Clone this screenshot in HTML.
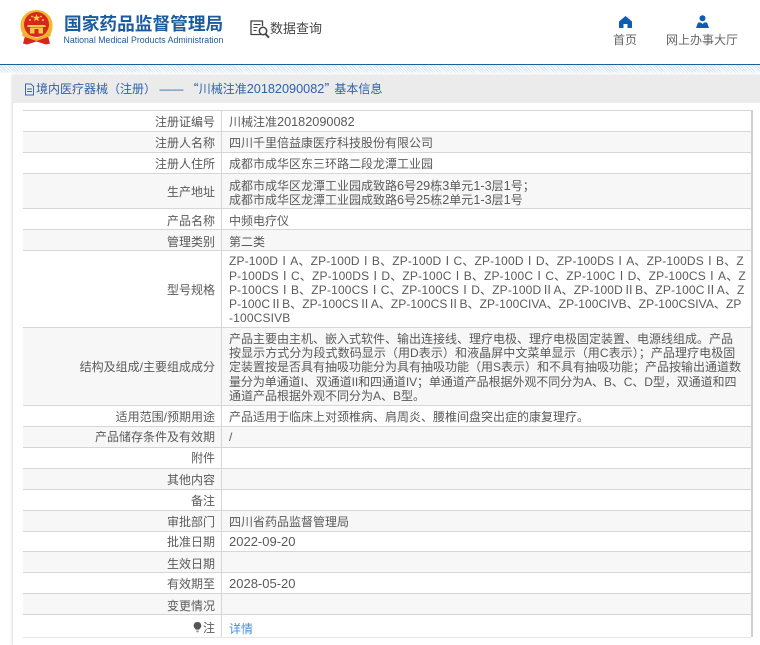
<!DOCTYPE html>
<html lang="zh"><head><meta charset="utf-8"><title>基本信息</title>
<style>
html,body{margin:0;padding:0;background:#fff}
#p{position:relative;width:760px;height:645px;overflow:hidden;background:#fff;font:12px/14.2px "Liberation Sans","Noto Sans CJK SC",sans-serif;color:#5a5a5a}
#p div,#p svg{position:absolute}
i{font-style:normal;font-size:12.7px}
b{font-weight:400;font-family:"Noto Sans CJK SC",sans-serif}
.r{left:23px;width:728px;border-bottom:1px solid #d6d6d6;box-sizing:border-box;--o:1px}
.e{background:#f7f7f7}
.l{left:0;width:192px;text-align:right;top:0;bottom:0;display:flex;align-items:center;justify-content:flex-end;transform:translateY(var(--o))}
.v{left:206px;top:0;bottom:0;width:522px;white-space:nowrap;display:flex;align-items:center;transform:translateY(var(--o))}
.v span{display:block}
.d{left:221px;top:110px;width:1px;height:527px;background:#d6d6d6}
.o2{--o:2px}
</style></head><body><div id="p">
<svg style="left:20px;top:9px" width="33" height="38" viewBox="0 0 33 38">
<path d="M4 27C1 23 .5 19 .5 16.500.5 7.500 7.500 1 16.500 1S32.500 7.500 32.500 16.500C32.500 20 32 24 29 27Z" fill="#f2b632"/>
<circle cx="16.500" cy="15.500" r="12.500" fill="#d8261f"/>
<path d="M16.500 5l1 2.800h2.900l-2.300 1.700.9 2.800-2.500-1.700-2.500 1.700.9-2.800-2.300-1.700h2.900z" fill="#f7d24a"/>
<circle cx="10" cy="11" r="1" fill="#f7d24a"/><circle cx="23" cy="11" r="1" fill="#f7d24a"/><circle cx="12" cy="7.500" r=".9" fill="#f7d24a"/><circle cx="21" cy="7.500" r=".9" fill="#f7d24a"/>
<path d="M8 16h17l1 2H7zM10 18.500h13v6H10z" fill="#f4c84a"/>
<path d="M14.500 20h4v4.500h-4z" fill="#d8261f"/>
<path d="M5 27l-2 7.500 4 1 9.500-3 9.500 3 4-1L28 27l-11.500 4z" fill="#d8261f"/>
<path d="M3 24l13.500 5L30 24l1 3-14.500 5L2 27z" fill="#edb02d"/>
</svg>
<div style="left:64px;top:14px;font-size:17.700px;line-height:20px;font-weight:700;color:#1c5c9c;white-space:nowrap">国家药品监督管理局</div>
<div style="left:63.500px;top:35px;font-size:8.800px;line-height:11px;color:#1c5c9c;white-space:nowrap">National Medical Products Administration</div>
<svg style="left:250px;top:20px" width="21" height="20" viewBox="0 0 21 20" fill="none" stroke="#444" stroke-width="1.300">
<path d="M11 14.500H1V1h11.500v5"/><path d="M3.500 4.500h7M3.500 7.500h4M3.500 10.500h3" stroke-width="1.100"/>
<circle cx="13" cy="11" r="3.700" stroke-width="1.500"/><path d="M15.500 14l3.500 3.700" stroke-width="2"/>
</svg>
<div style="left:270px;top:20px;font-size:13px;line-height:17px;color:#444;white-space:nowrap">数据查询</div>
<svg style="left:619px;top:16px" width="13" height="12" viewBox="0 0 13 12"><path d="M6.500 0L13 5.500V12H8.500V8h-4v4H0V5.500z" fill="#0f5cb3"/></svg>
<svg style="left:696px;top:15px" width="13" height="13" viewBox="0 0 13 13"><circle cx="6.500" cy="3.200" r="3" fill="#0f5cb3"/><path d="M0 13L2 7.500h3L6.500 9 8 7.500h3l2 5.500z" fill="#0f5cb3"/></svg>
<div style="left:613px;top:33px;color:#666;line-height:15px;font-size:12px;white-space:nowrap">首页</div>
<div style="left:666px;top:33px;color:#666;line-height:15px;font-size:12px;white-space:nowrap">网上办事大厅</div>
<div style="left:0;top:64px;width:760px;height:1px;background:#1f5f98"></div>
<div style="left:0;top:65px;width:760px;height:8px;background:repeating-linear-gradient(45deg,#cfe4f2 0 1px,#fff 1px 2px)"></div>
<div style="left:0;top:70px;width:760px;height:5px;background:linear-gradient(#fff0,#fff)"></div>
<div style="left:13px;top:75px;width:760px;height:570px;background:#fff;box-shadow:-1px 0 3px #ddd"></div>
<div style="left:13px;top:75px;width:747px;height:28px;background:#ebebeb"></div>
<svg style="left:24px;top:83px" width="11" height="13" viewBox="0 0 11 13" fill="none" stroke="#3d68a5"><path d="M1.500 1h5.500l2.500 2.500V12h-8zM3 6h5M3 8.500h5"/></svg>
<div style="left:36px;top:81px;color:#2f62a5;line-height:16px;white-space:nowrap">境内医疗器械（注册） —— <b>“</b>川械注准<i>20182090082</i><b>”</b><span style="margin-left:-2px">基本信息</span></div>
<div style="left:23px;top:110px;width:728px;height:1px;background:#d6d6d6"></div>
<div style="left:751px;top:110px;width:2px;height:527px;background:#d0d0d0"></div>
<div class="r" style="top:111px;height:21px"><div class="l">注册证编号</div><div class="v">川械注准<i>20182090082</i></div></div>
<div class="r e" style="top:132px;height:21px"><div class="l">注册人名称</div><div class="v">四川千里倍益康医疗科技股份有限公司</div></div>
<div class="r" style="top:153px;height:21px"><div class="l">注册人住所</div><div class="v">成都市成华区东三环路二段龙潭工业园</div></div>
<div class="r e o2" style="top:174px;height:35px"><div class="l" style="--o:1px">生产地址</div><div class="v"><span>成都市成华区龙潭工业园成致路<i>6</i>号<i>29</i>栋<i>3</i>单元<i>1-3</i>层<i>1</i>号；<br>成都市成华区龙潭工业园成致路<i>6</i>号<i>25</i>栋<i>2</i>单元<i>1-3</i>层<i>1</i>号</span></div></div>
<div class="r o2" style="top:209px;height:21px"><div class="l">产品名称</div><div class="v">中频电疗仪</div></div>
<div class="r e o2" style="top:230px;height:21px"><div class="l">管理类别</div><div class="v">第二类</div></div>
<div class="r" style="top:251px;height:77px"><div class="l">型号规格</div><div class="v"><span style="letter-spacing:.16px">ZP-100DⅠA、ZP-100DⅠB、ZP-100DⅠC、ZP-100DⅠD、ZP-100DSⅠA、ZP-100DSⅠB、Z<br>P-100DSⅠC、ZP-100DSⅠD、ZP-100CⅠB、ZP-100CⅠC、ZP-100CⅠD、ZP-100CSⅠA、Z<br>P-100CSⅠB、ZP-100CSⅠC、ZP-100CSⅠD、ZP-100DⅡA、ZP-100DⅡB、ZP-100CⅡA、Z<br><u style="text-decoration:none;letter-spacing:.06px">P-100CⅡB、ZP-100CSⅡA、ZP-100CSⅡB、ZP-100CIVA、ZP-100CIVB、ZP-100CSIVA、ZP</u><br>-100CSIVB</span></div></div>
<div class="r e" style="top:328px;height:78px"><div class="l">结构及组成/主要组成成分</div><div class="v"><span style="line-height:14.3px">产品主要由主机、嵌入式软件、输出连接线、理疗电极、理疗电极固定装置、电源线组成。产品<br><u style="text-decoration:none;letter-spacing:.07px">按显示方式分为段式数码显示（用D表示）和液晶屏中文菜单显示（用C表示）；产品理疗电极固</u><br>定装置按是否具有抽吸功能分为具有抽吸功能（用S表示）和不具有抽吸功能；产品按输出通道数<br><u style="text-decoration:none;letter-spacing:-.07px">量分为单通道I、双通道II和四通道IV；单通道产品根据外观不同分为A、B、C、D型，双通道和四</u><br>通道产品根据外观不同分为A、B型。</span></div></div>
<div class="r" style="top:406px;height:21px"><div class="l">适用范围/预期用途</div><div class="v">产品适用于临床上对颈椎病、肩周炎、腰椎间盘突出症的康复理疗。</div></div>
<div class="r e" style="top:427px;height:21px;--o:0px"><div class="l">产品储存条件及有效期</div><div class="v">/</div></div>
<div class="r" style="top:448px;height:21px;--o:0px"><div class="l">附件</div></div>
<div class="r e" style="top:469px;height:21px"><div class="l">其他内容</div></div>
<div class="r" style="top:490px;height:21px"><div class="l">备注</div></div>
<div class="r e" style="top:511px;height:21px"><div class="l">审批部门</div><div class="v">四川省药品监督管理局</div></div>
<div class="r" style="top:532px;height:20px"><div class="l">批准日期</div><div class="v"><i style="font-size:13px">2022-09-20</i></div></div>
<div class="r e o2" style="top:552px;height:21px"><div class="l">生效日期</div></div>
<div class="r" style="top:573px;height:21px"><div class="l">有效期至</div><div class="v"><i style="font-size:13px">2028-05-20</i></div></div>
<div class="r e o2" style="top:594px;height:21px"><div class="l">变更情况</div></div>
<div class="r" style="top:615px;height:23px;border-bottom-color:#e6e6e6;--o:2px"><div class="l">注</div><div class="v" style="color:#4a90d9;--o:3px">详情</div></div>
<svg style="left:193px;top:622px" width="9" height="11" viewBox="0 0 10 13"><path d="M5 0C2 0 .5 2 .5 4.500c0 2 1.500 3 2.500 4.500h4c1-1.500 2.500-2.500 2.500-4.500C9.500 2 8 0 5 0z" fill="#555"/><path d="M3.500 10h3v1.500l-1.500 1-1.500-1z" fill="#999"/></svg>
<div class="d"></div>
</div></body></html>
